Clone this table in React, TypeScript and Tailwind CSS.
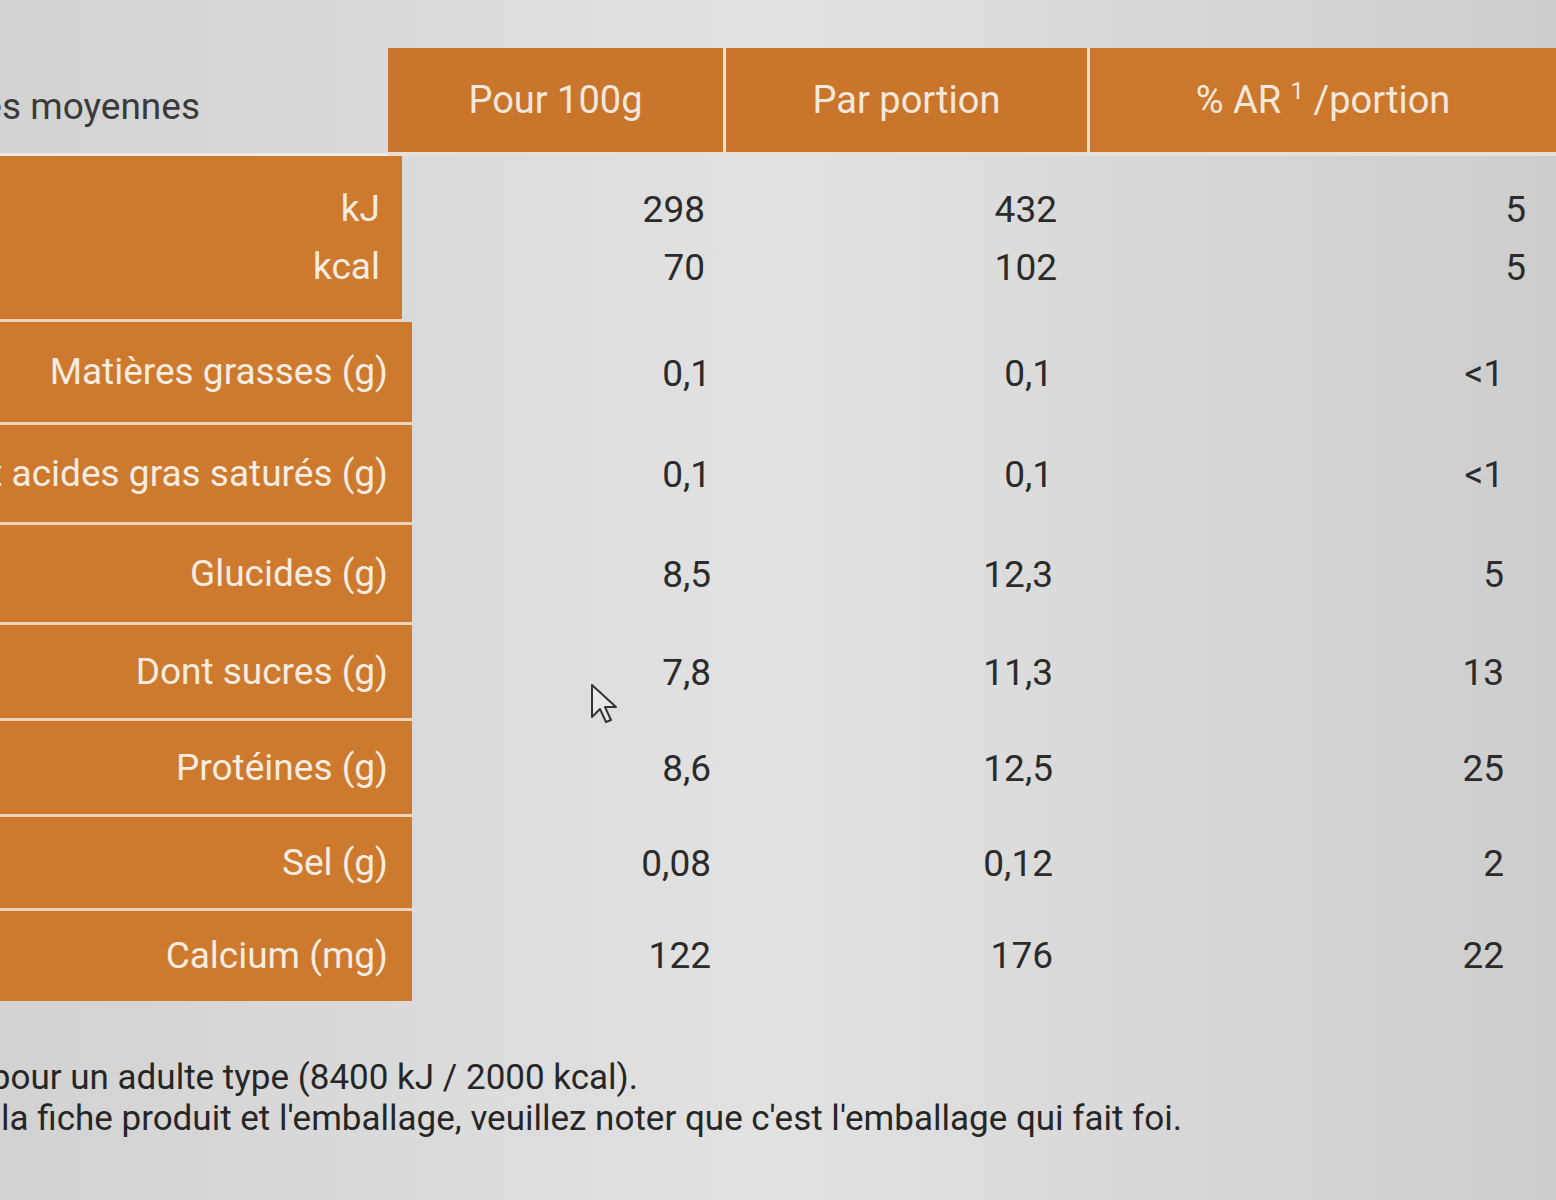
import React from "react";

const rows: { label: string; h: string; a: string; b: string; c: string }[] = [
  { label: "Matières grasses (g)", h: "h-[103px]", a: "0,1", b: "0,1", c: "<1" },
  { label: "dont acides gras saturés (g)", h: "h-[100px]", a: "0,1", b: "0,1", c: "<1" },
  { label: "Glucides (g)", h: "h-[100px]", a: "8,5", b: "12,3", c: "5" },
  { label: "Dont sucres (g)", h: "h-[96px]", a: "7,8", b: "11,3", c: "13" },
  { label: "Protéines (g)", h: "h-[96px]", a: "8,6", b: "12,5", c: "25" },
  { label: "Sel (g)", h: "h-[94px]", a: "0,08", b: "0,12", c: "2" },
  { label: "Calcium (mg)", h: "h-[90px]", a: "122", b: "176", c: "22" },
];

function Cursor() {
  return (
    <svg className="absolute left-[590px] top-[683px]" width="28" height="42" viewBox="0 0 28 42">
      <path
        d="M2 2 L2 34 L10 26 L16 39 L21 37 L15 24 L26 24 Z"
        fill="#e8e8e8"
        stroke="#333"
        strokeWidth="2"
        strokeLinejoin="round"
      />
    </svg>
  );
}

export default function App() {
  const font = { fontFamily: "Roboto, 'Liberation Sans', sans-serif" };
  return (
    <div
      className="relative w-[1556px] h-[1200px] overflow-hidden bg-linear-to-r from-[#d2d2d2] via-[#e2e2e2] to-[#cdcdcd] text-[#2b2b2b]"
      style={font}
    >
      <div className="pt-[48px]">
        {/* header */}
        <div className="grid grid-cols-[388px_335px_364px_1fr] h-[108px]">
          <div className="flex items-center border-b-[3px] border-[#ececec]">
            <div className="w-[200px] flex justify-end whitespace-nowrap text-[37px] text-[#3a3a3a] pt-[12px]">
              <span>Valeurs nutritionnelles moyennes</span>
            </div>
          </div>
          <div className="bg-[#c9752b] flex items-center justify-center text-[38px] text-[#f4e8dc] border-b-[4px] border-[#eadfd6]">
            Pour 100g
          </div>
          <div className="bg-[#c9752b] flex items-center justify-center text-[38px] text-[#f4e8dc] border-l-[3px] border-b-[4px] border-[#eadfd6]">
            Par portion
          </div>
          <div className="bg-[#cc782c] flex items-center justify-center text-[38px] text-[#f4e8dc] border-l-[3px] border-b-[4px] border-[#eadfd6]">
            <span>
              % AR <span className="text-[24px] relative top-[-14px]">1</span> /portion
            </span>
          </div>
        </div>

        {/* energy row */}
        <div className="grid grid-cols-[402px_321px_364px_1fr] h-[166px] text-[37px]">
          <div className="bg-[#cd7a2e] border-b-[3px] border-[#ecd3bb] flex flex-col justify-center items-end pr-[22px] text-[#f6ece2] leading-[58px]">
            <div>kJ</div>
            <div>kcal</div>
          </div>
          <div className="flex flex-col justify-center items-end pr-[18px] leading-[58px]">
            <div>298</div>
            <div>70</div>
          </div>
          <div className="flex flex-col justify-center items-end pr-[30px] leading-[58px]">
            <div>432</div>
            <div>102</div>
          </div>
          <div className="flex flex-col justify-center items-end pr-[30px] leading-[58px]">
            <div>5</div>
            <div>5</div>
          </div>
        </div>

        {rows.map((r, i) => (
          <div key={i} className={`grid grid-cols-[412px_311px_364px_1fr] text-[37px] ${r.h}`}>
            <div
              className={`bg-[#cd7a2e] flex items-center justify-end pr-[24px] text-[#f6ece2] whitespace-nowrap ${
                i < rows.length - 1 ? "border-b-[3px] border-[#ecd3bb]" : ""
              }`}
            >
              <span>{r.label}</span>
            </div>
            <div className="flex items-center justify-end pr-[12px]">{r.a}</div>
            <div className="flex items-center justify-end pr-[34px]">{r.b}</div>
            <div className="flex items-center justify-end pr-[52px]">{r.c}</div>
          </div>
        ))}

        {/* footnotes */}
        <div className="mt-[56px] text-[35px] text-[#262626] leading-[41px] whitespace-nowrap">
          <div className="w-[638px] flex justify-end">
            <span>¹ Apport de référence pour un adulte type (8400 kJ / 2000 kcal).</span>
          </div>
          <div className="w-[1182px] flex justify-end">
            <span>
              En cas de différence entre la fiche produit et l'emballage, veuillez noter que c'est l'emballage qui fait foi.
            </span>
          </div>
        </div>
      </div>
      <Cursor />
    </div>
  );
}
